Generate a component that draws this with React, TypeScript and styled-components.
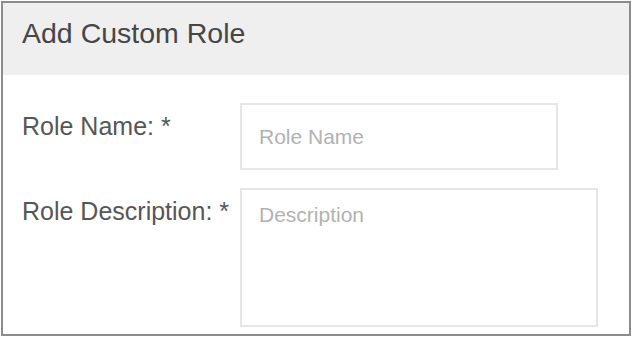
import styled, { createGlobalStyle } from "styled-components";

const GlobalStyle = createGlobalStyle`
  html, body {
    margin: 0;
    padding: 0;
    background: #ffffff;
  }
  body {
    font-family: "Liberation Sans", Arial, sans-serif;
  }
`;

const Page = styled.div`
  padding: 1px;
  width: 632px;
  height: 338px;
  box-sizing: border-box;
`;

const Card = styled.div`
  width: 630px;
  height: 335px;
  box-sizing: border-box;
  border: 2px solid #8c8c8c;
  display: flex;
  flex-direction: column;
  background: #ffffff;
`;

const Header = styled.div`
  height: 72px;
  flex-shrink: 0;
  display: flex;
  align-items: center;
  padding: 0 0 12px 19px;
  box-sizing: border-box;
  background: #efefef;
  color: #464646;
  font-size: 28.5px;
`;

const Body = styled.div`
  display: grid;
  grid-template-columns: 218px 1fr;
  row-gap: 18px;
  padding: 28px 0 0 19px;
`;

const Label = styled.label`
  margin-top: 9px;
  font-size: 25px;
  line-height: 28px;
  color: #565656;
  white-space: nowrap;
`;

const fieldStyle = `
  box-sizing: border-box;
  border: 2px solid #e6e6e6;
  border-radius: 0;
  outline: none;
  font-family: "Liberation Sans", Arial, sans-serif;
  font-size: 21px;
  color: #444444;
  padding: 0 17px;
  background: #ffffff;

  &::placeholder {
    color: #b2b2b2;
  }
`;

const TextInput = styled.input<{ $width: number }>`
  ${fieldStyle}
  width: ${(p) => p.$width}px;
  height: 67px;
`;

const TextArea = styled.textarea<{ $width: number }>`
  ${fieldStyle}
  width: ${(p) => p.$width}px;
  height: 139px;
  padding-top: 13px;
  line-height: 24px;
  resize: none;
`;

export default function App() {
  return (
    <>
      <GlobalStyle />
      <Page>
        <Card>
          <Header>Add Custom Role</Header>
          <Body>
            <Label>Role Name: *</Label>
            <TextInput $width={318} placeholder="Role Name" />
            <Label>Role Description: *</Label>
            <TextArea $width={358} placeholder="Description" />
          </Body>
        </Card>
      </Page>
    </>
  );
}
